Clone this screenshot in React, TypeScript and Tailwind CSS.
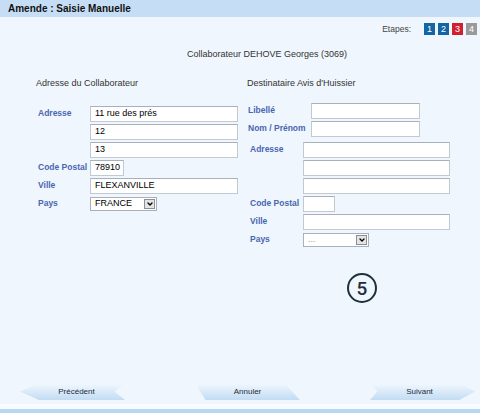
import { ChevronDown } from 'lucide-react';

const font = { fontFamily: '"Liberation Sans", Arial, sans-serif' };

const steps = [
  { n: '1', cls: 'bg-[#1465a3]' },
  { n: '2', cls: 'bg-[#1465a3]' },
  { n: '3', cls: 'bg-[#d11f32]' },
  { n: '4', cls: 'bg-[#9a9a9a]' },
];

function Field({ value = '', className = '' }: { value?: string; className?: string }) {
  return (
    <div className={`flex h-[16px] shrink-0 items-center border border-[#c3c9d1] border-t-[#a9b0b9] bg-white pl-[4px] text-[9px] text-black ${className}`}>
      {value}
    </div>
  );
}

function Select({ value, className = '', muted = false }: { value: string; className?: string; muted?: boolean }) {
  return (
    <div className={`flex h-[14px] shrink-0 items-center justify-between border border-[#a9b0b9] bg-white pl-[4px] pr-[1px] text-[9px] ${muted ? 'text-[#999]' : 'text-black'} ${className}`}>
      <span>{value}</span>
      <span className="flex h-[10px] w-[11px] items-center justify-center border border-[#8a9099] bg-[#e4e4e4]">
        <ChevronDown className="h-[8px] w-[8px] text-black" strokeWidth={4} />
      </span>
    </div>
  );
}

function Label({ children, className = '' }: { children: string; className?: string }) {
  return <span className={`shrink-0 whitespace-nowrap text-[8.5px] font-bold text-[#4a66b3] ${className}`}>{children}</span>;
}

export default function App() {
  return (
    <div style={font} className="relative flex h-[413px] w-[480px] flex-col overflow-hidden bg-[#eff6fd] text-[#333]">
      <div className="flex h-[17px] items-center bg-[#c5def5] pl-[8px] text-[10px] font-bold text-[#111]">
        Amende : Saisie Manuelle
      </div>

      <div className="flex items-center justify-end gap-[3px] pr-[3px] pt-[6px]">
        <span className="mr-[10px] text-[8.5px] text-[#444]">Etapes:</span>
        {steps.map((s) => (
          <span key={s.n} className={`flex h-[12px] w-[11px] items-center justify-center text-[9px] text-white ${s.cls}`}>
            {s.n}
          </span>
        ))}
      </div>

      <div className="ml-[187px] mt-[12px] text-[9px] leading-[12px] text-[#333]">
        Collaborateur DEHOVE Georges (3069)
      </div>

      <div className="mt-[17px] flex">
        <div className="w-[247px] shrink-0 pl-[36px]">
          <div className="text-[9px] leading-[12px] text-[#333]">Adresse du Collaborateur</div>
          <div className="mt-[17px] flex flex-col gap-[2px] pl-[2px]">
            <div className="flex items-center">
              <Label className="w-[52px]">Adresse</Label>
              <Field value="11 rue des prés" className="w-[148px]" />
            </div>
            <div className="flex items-center">
              <span className="w-[52px] shrink-0" />
              <Field value="12" className="w-[148px]" />
            </div>
            <div className="flex items-center">
              <span className="w-[52px] shrink-0" />
              <Field value="13" className="w-[148px]" />
            </div>
            <div className="flex items-center">
              <Label className="w-[52px]">Code Postal</Label>
              <Field value="78910" className="w-[34px]" />
            </div>
            <div className="flex items-center">
              <Label className="w-[52px]">Ville</Label>
              <Field value="FLEXANVILLE" className="w-[148px]" />
            </div>
            <div className="flex h-[16px] items-center">
              <Label className="w-[52px]">Pays</Label>
              <Select value="FRANCE" className="w-[67px]" />
            </div>
          </div>
        </div>

        <div>
          <div className="text-[9px] leading-[12px] text-[#333]">Destinataire Avis d'Huissier</div>
          <div className="mt-[14px] flex flex-col gap-[2px] pl-[1px]">
            <div className="flex items-center">
              <Label className="w-[63px]">Libellé</Label>
              <Field className="w-[109px]" />
            </div>
            <div className="flex items-center">
              <Label className="w-[63px]">Nom / Prénom</Label>
              <Field className="w-[109px]" />
            </div>
          </div>
          <div className="mt-[5px] flex flex-col gap-[2px] pl-[3px]">
            <div className="flex items-center">
              <Label className="w-[53px]">Adresse</Label>
              <Field className="w-[147px]" />
            </div>
            <div className="flex items-center">
              <span className="w-[53px] shrink-0" />
              <Field className="w-[147px]" />
            </div>
            <div className="flex items-center">
              <span className="w-[53px] shrink-0" />
              <Field className="w-[147px]" />
            </div>
            <div className="flex items-center">
              <Label className="w-[53px]">Code Postal</Label>
              <Field className="w-[32px]" />
            </div>
            <div className="flex items-center">
              <Label className="w-[53px]">Ville</Label>
              <Field className="w-[147px]" />
            </div>
            <div className="flex h-[16px] items-center">
              <Label className="w-[53px]">Pays</Label>
              <Select value="..." muted className="w-[66px]" />
            </div>
          </div>
        </div>
      </div>

      <div
        style={{ fontFamily: 'Roboto, "Liberation Sans", sans-serif' }}
        className="absolute left-[347px] top-[273px] flex h-[30px] w-[30px] items-center justify-center rounded-full border-[2.5px] border-[#1f2f3d] text-[19px] font-medium leading-none text-[#1f2f3d]"
      >
        5
      </div>

      <div className="mt-auto flex gap-[70px] pl-[20px]">
        <button className="flex h-[17px] w-[105px] items-center justify-center bg-gradient-to-b from-[#f2f8fe] to-[#c2dcf3] pl-[8px] text-[8px] text-[#1d2a3a] [clip-path:polygon(18%_0,100%_0,90%_50%,100%_100%,18%_100%,0_50%)]">
          Précédent
        </button>
        <button className="flex h-[17px] w-[105px] items-center justify-center bg-gradient-to-b from-[#f2f8fe] to-[#c2dcf3] text-[8px] text-[#1d2a3a] [clip-path:polygon(0_0,85%_0,100%_100%,10%_100%)]">
          Annuler
        </button>
        <button className="flex h-[17px] w-[105px] items-center justify-center bg-gradient-to-b from-[#f2f8fe] to-[#c2dcf3] pr-[6px] text-[8px] text-[#1d2a3a] [clip-path:polygon(0_0,85%_0,100%_50%,85%_100%,0_100%,7%_50%)]">
          Suivant
        </button>
      </div>

      <div className="mt-[4px] h-[5px] bg-[#f8fbff]" />
      <div className="h-[4px] bg-[#b8d7f1]" />
    </div>
  );
}
